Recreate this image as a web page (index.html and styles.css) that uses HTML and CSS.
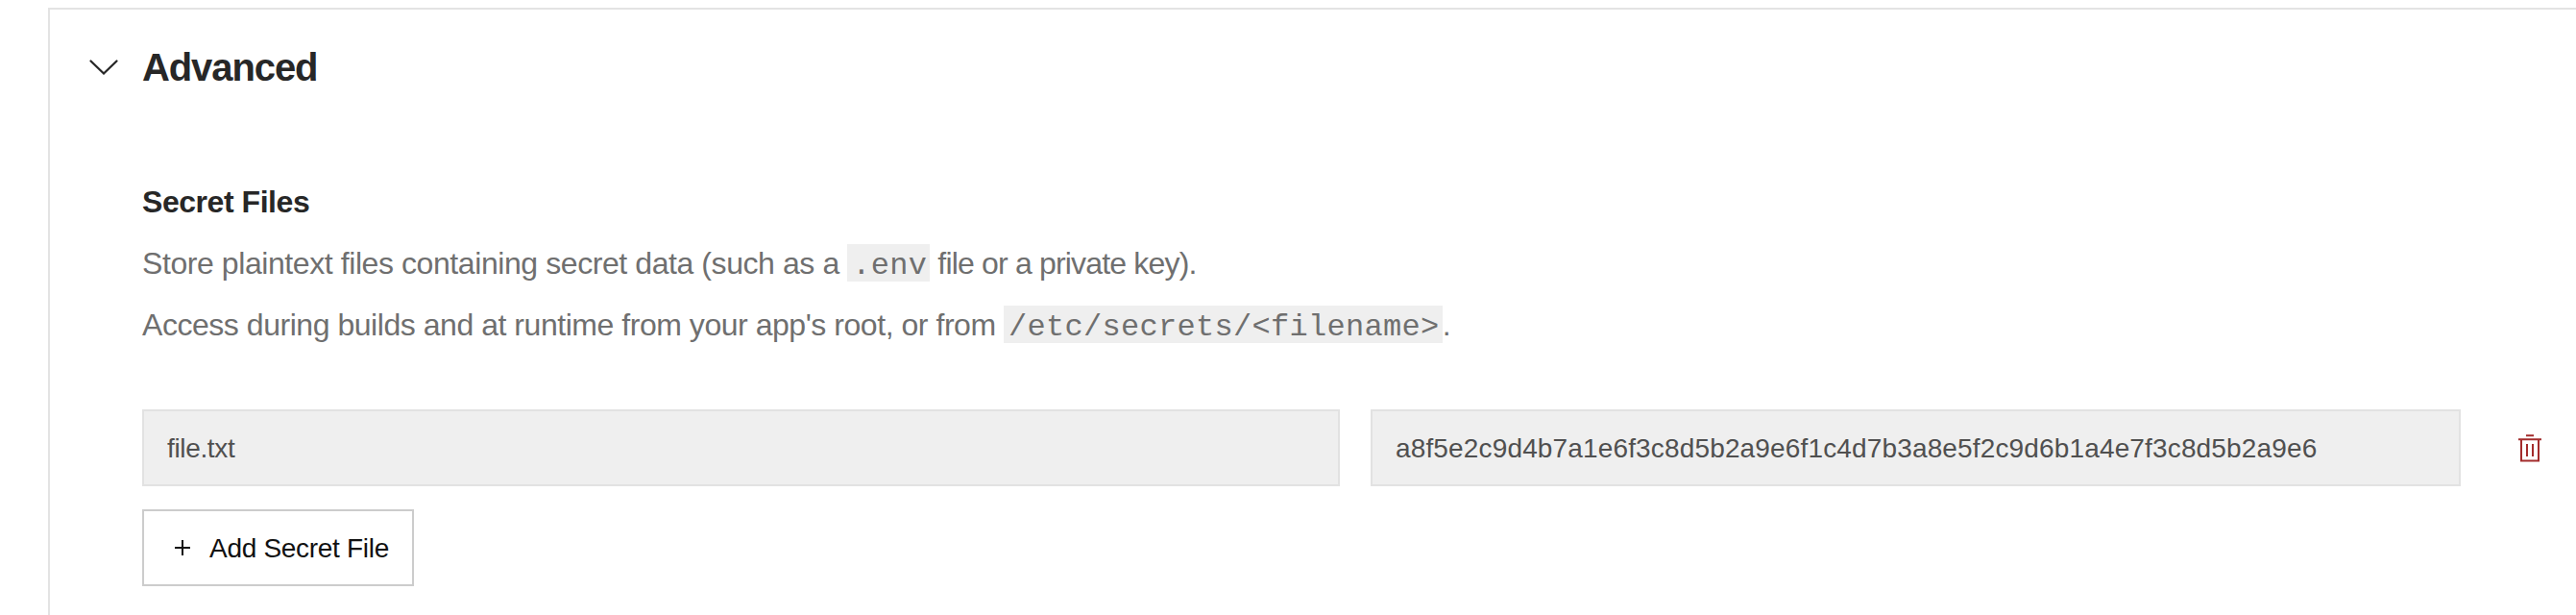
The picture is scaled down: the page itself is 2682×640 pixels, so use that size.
FILE: index.html
```html
<!DOCTYPE html>
<html lang="en">
<head>
<meta charset="utf-8">
<title>Advanced</title>
<link rel="stylesheet" href="styles.css">
</head>
<body>
<section class="panel">
  <header class="panel-header">
    <svg class="chevron" width="32" height="32" viewBox="0 0 32 32" fill="none" stroke="#272727" stroke-width="2.3"><path d="M2.5 9.5 16 22.5 29.5 9.5" stroke-linecap="round"/></svg>
    <h2 class="panel-title">Advanced</h2>
  </header>
  <div class="panel-body">
    <h3 class="section-title">Secret Files</h3>
    <div class="description">
      <p class="line"><span class="lead">Store plaintext files containing secret data (such as a </span><code class="code">.env</code><span class="tail"> file or a private key).</span></p>
      <p class="line"><span class="lead-long">Access during builds and at runtime from your app's root, or from </span><code class="code">/etc/secrets/&lt;filename&gt;</code>.</p>
    </div>
    <div class="file-row">
      <div class="field field-name">file.txt</div>
      <div class="field field-value">a8f5e2c9d4b7a1e6f3c8d5b2a9e6f1c4d7b3a8e5f2c9d6b1a4e7f3c8d5b2a9e6</div>
      <button class="delete" type="button" aria-label="Delete">
        <svg width="32" height="32" viewBox="0 0 32 32" fill="none" stroke="#a32c2c" stroke-width="2"><path d="M12 3.3h8M4 7.3h24M7 7.3v22.2h18V7.3M13 12v13M19 12v13"/></svg>
      </button>
    </div>
    <button class="add" type="button">
      <svg width="16" height="16" viewBox="0 0 16 16" fill="none" stroke="#111" stroke-width="2"><path d="M8 0v16M0 8h16"/></svg>
      <span class="add-label">Add Secret File</span>
    </button>
  </div>
</section>
</body>
</html>
```
FILE: styles.css
```css
* { box-sizing: border-box; }
html, body { margin: 0; }
body {
  height: 640px;
  overflow: hidden;
  padding: 8px 0 0 50px;
  background: #fff;
  font-family: "Liberation Sans", Arial, sans-serif;
  color: #272727;
}
.panel {
  height: 632px;
  border: solid #e3e3e3;
  border-width: 2px 0 0 2px;
  padding: 36px 0 0 40px;
}
.panel-header { display: flex; align-items: center; gap: 24px; height: 48px; }
.panel-title { margin: 0; font-size: 40px; line-height: 48px; letter-spacing: -1.1px; }
.panel-body { padding: 96px 0 0 56px; }
.section-title { margin: 0; font-size: 32px; line-height: 40px; letter-spacing: -0.45px; }
.description { margin: 12px 0 56px; color: #6f6f6f; font-size: 32px; }
.line { margin: 0; height: 64px; line-height: 64px; white-space: nowrap; }
.lead { letter-spacing: -0.42px; }
.lead-long { letter-spacing: -0.46px; }
.tail { letter-spacing: -0.82px; }
.code {
  display: inline-block;
  padding: 6px 3px 0 5px;
  background: #efefef;
  font-family: "Liberation Mono", monospace;
  font-size: 32px;
  line-height: 33px;
  letter-spacing: 0.3px;
}
.file-row {
  display: grid;
  grid-template-columns: 1247px 1135px 56px;
  column-gap: 32px;
  align-items: center;
}
.field {
  height: 80px;
  padding: 1px 24px 0;
  border: 2px solid #e2e2e2;
  background: #efefef;
  color: #505050;
  font-size: 28px;
  line-height: 76px;
  white-space: nowrap;
}
.field-name { letter-spacing: -0.35px; }
.field-value { letter-spacing: 0.15px; }
.delete { margin: 0 0 0 24px; padding: 0; border: 0; background: none; width: 32px; height: 32px; }
.delete svg { display: block; }
.add {
  display: flex;
  align-items: center;
  gap: 20px;
  width: 283px;
  height: 80px;
  margin-top: 24px;
  padding: 0 0 0 32px;
  border: 2px solid #ccc;
  background: #fff;
  color: #111;
  font: 28px/40px "Liberation Sans", Arial, sans-serif;
  letter-spacing: -0.3px;
  white-space: nowrap;
}
.add-label { padding-top: 2px; }
```
